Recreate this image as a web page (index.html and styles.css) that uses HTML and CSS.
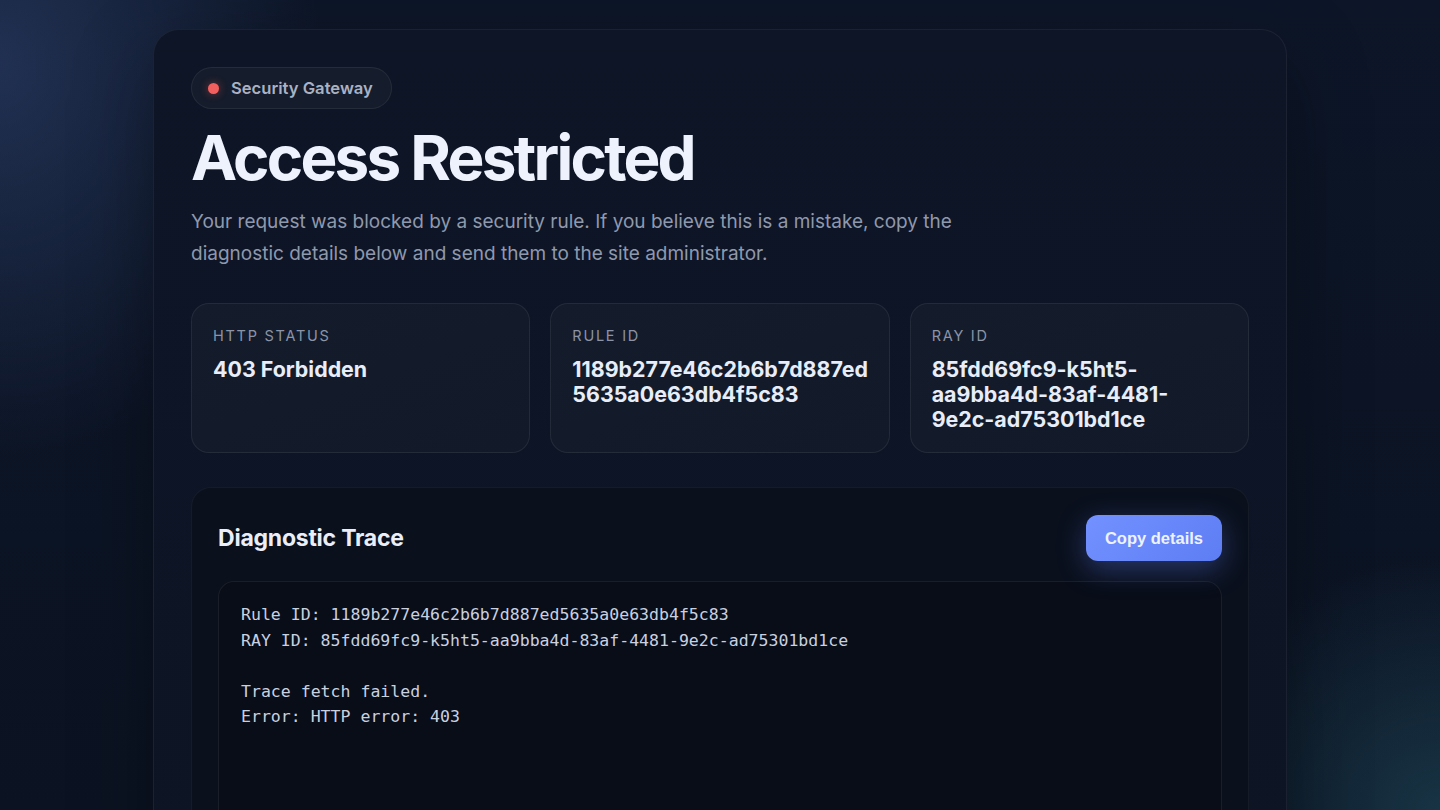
FILE: index.html
```html
<!DOCTYPE html>
<html lang="en">
<head>
<meta charset="utf-8">
<title>Access Restricted</title>
<link rel="stylesheet" href="styles.css">
</head>
<body>
<main class="shell">
  <section class="card">
    <div class="badge"><span class="dot"></span><span>Security Gateway</span></div>
    <h1 class="title">Access Restricted</h1>
    <p class="lead">Your request was blocked by a security rule. If you believe this is a mistake, copy the diagnostic details below and send them to the site administrator.</p>
    <div class="stats">
      <div class="stat">
        <div class="stat-label">HTTP Status</div>
        <div class="stat-value">403 Forbidden</div>
      </div>
      <div class="stat">
        <div class="stat-label">Rule ID</div>
        <div class="stat-value">1189b277e46c2b6b7d887ed5635a0e63db4f5c83</div>
      </div>
      <div class="stat">
        <div class="stat-label">Ray ID</div>
        <div class="stat-value">85fdd69fc9-k5ht5-aa9bba4d-83af-4481-9e2c-ad75301bd1ce</div>
      </div>
    </div>
    <div class="panel">
      <div class="panel-head">
        <h2 class="panel-title">Diagnostic Trace</h2>
        <button class="copy-btn" type="button">Copy details</button>
      </div>
      <pre class="trace">Rule ID: 1189b277e46c2b6b7d887ed5635a0e63db4f5c83
RAY ID: 85fdd69fc9-k5ht5-aa9bba4d-83af-4481-9e2c-ad75301bd1ce

Trace fetch failed.
Error: HTTP error: 403</pre>
    </div>
  </section>
</main>
</body>
</html>
```
FILE: styles.css
```css
* { box-sizing: border-box; }
html, body { margin: 0; height: 100%; }
body {
  font-family: Inter, "Noto Sans", sans-serif;
  color: #e7edf9;
  overflow: hidden;
  background:
    radial-gradient(ellipse 460px 560px at 0% 8%, rgba(46, 66, 110, 0.6), transparent 70%),
    radial-gradient(ellipse 380px 360px at 100% 100%, rgba(34, 78, 96, 0.55), transparent 70%),
    linear-gradient(180deg, #0d1628 0%, #0b1322 100%);
}
.shell {
  display: flex;
  justify-content: center;
  padding-top: 29px;
}
.card {
  width: 1134px;
  min-height: 900px;
  padding: 37px 37px;
  border-radius: 26px;
  border: 1px solid rgba(255, 255, 255, 0.06);
  background: linear-gradient(180deg, #0e1526 0%, #0d1424 100%);
  box-shadow: 0 30px 80px rgba(0, 0, 0, 0.35);
}
.badge {
  display: inline-flex;
  align-items: center;
  gap: 12px;
  height: 42px;
  padding: 0 18px 0 16px;
  border-radius: 999px;
  border: 1px solid rgba(255, 255, 255, 0.07);
  background: #151c2b;
  color: #a9b2c4;
  font-size: 16.6px;
  font-weight: 600;
}
.dot {
  width: 11px;
  height: 11px;
  border-radius: 50%;
  background: #f25f5f;
  box-shadow: 0 0 8px rgba(242, 95, 95, 0.45);
}
.title {
  margin: 15px 0 0;
  font-size: 62px;
  line-height: 68px;
  font-weight: 700;
  letter-spacing: -0.045em;
  color: #edf2fd;
}
.lead {
  margin: 14px 0 0;
  max-width: 800px;
  font-size: 19px;
  line-height: 32px;
  color: #8f99ad;
}
.stats {
  margin-top: 33px;
  display: grid;
  grid-template-columns: repeat(3, 1fr);
  gap: 20px;
}
.stat {
  padding: 22px 19px 20px 21px;
  border-radius: 18px;
  border: 1px solid rgba(255, 255, 255, 0.07);
  background: linear-gradient(160deg, #141c2c 0%, #121a29 100%);
}
.stat-label {
  font-size: 14.5px;
  line-height: 20px;
  letter-spacing: 0.12em;
  text-transform: uppercase;
  color: #8b94a7;
}
.stat-value {
  margin-top: 11px;
  font-size: 21.4px;
  line-height: 25px;
  font-weight: 700;
  color: #e7edf9;
  overflow-wrap: anywhere;
}
.panel {
  margin-top: 34px;
  padding: 27px 26px 26px;
  border-radius: 20px;
  border: 1px solid rgba(255, 255, 255, 0.05);
  background: #0a101c;
}
.panel-head {
  display: flex;
  align-items: center;
  justify-content: space-between;
}
.panel-title {
  margin: 0;
  font-size: 23px;
  font-weight: 700;
  letter-spacing: -0.01em;
  color: #e9eef9;
}
.copy-btn {
  height: 46px;
  padding: 0 19px;
  border: 0;
  border-radius: 12px;
  background: linear-gradient(135deg, #7391ff 0%, #5d7df4 100%);
  color: #eef2ff;
  font-family: "Liberation Sans", Arial, sans-serif;
  font-size: 16.5px;
  font-weight: 700;
  box-shadow: 0 8px 28px rgba(96, 128, 255, 0.35);
}
.trace {
  margin: 20px 0 0;
  min-height: 300px;
  padding: 20px 22px;
  border-radius: 16px;
  border: 1px solid rgba(255, 255, 255, 0.07);
  background: #080d18;
  font-family: "DejaVu Sans Mono", monospace;
  font-size: 16.55px;
  line-height: 25.6px;
  color: #c9d1e0;
}
```
